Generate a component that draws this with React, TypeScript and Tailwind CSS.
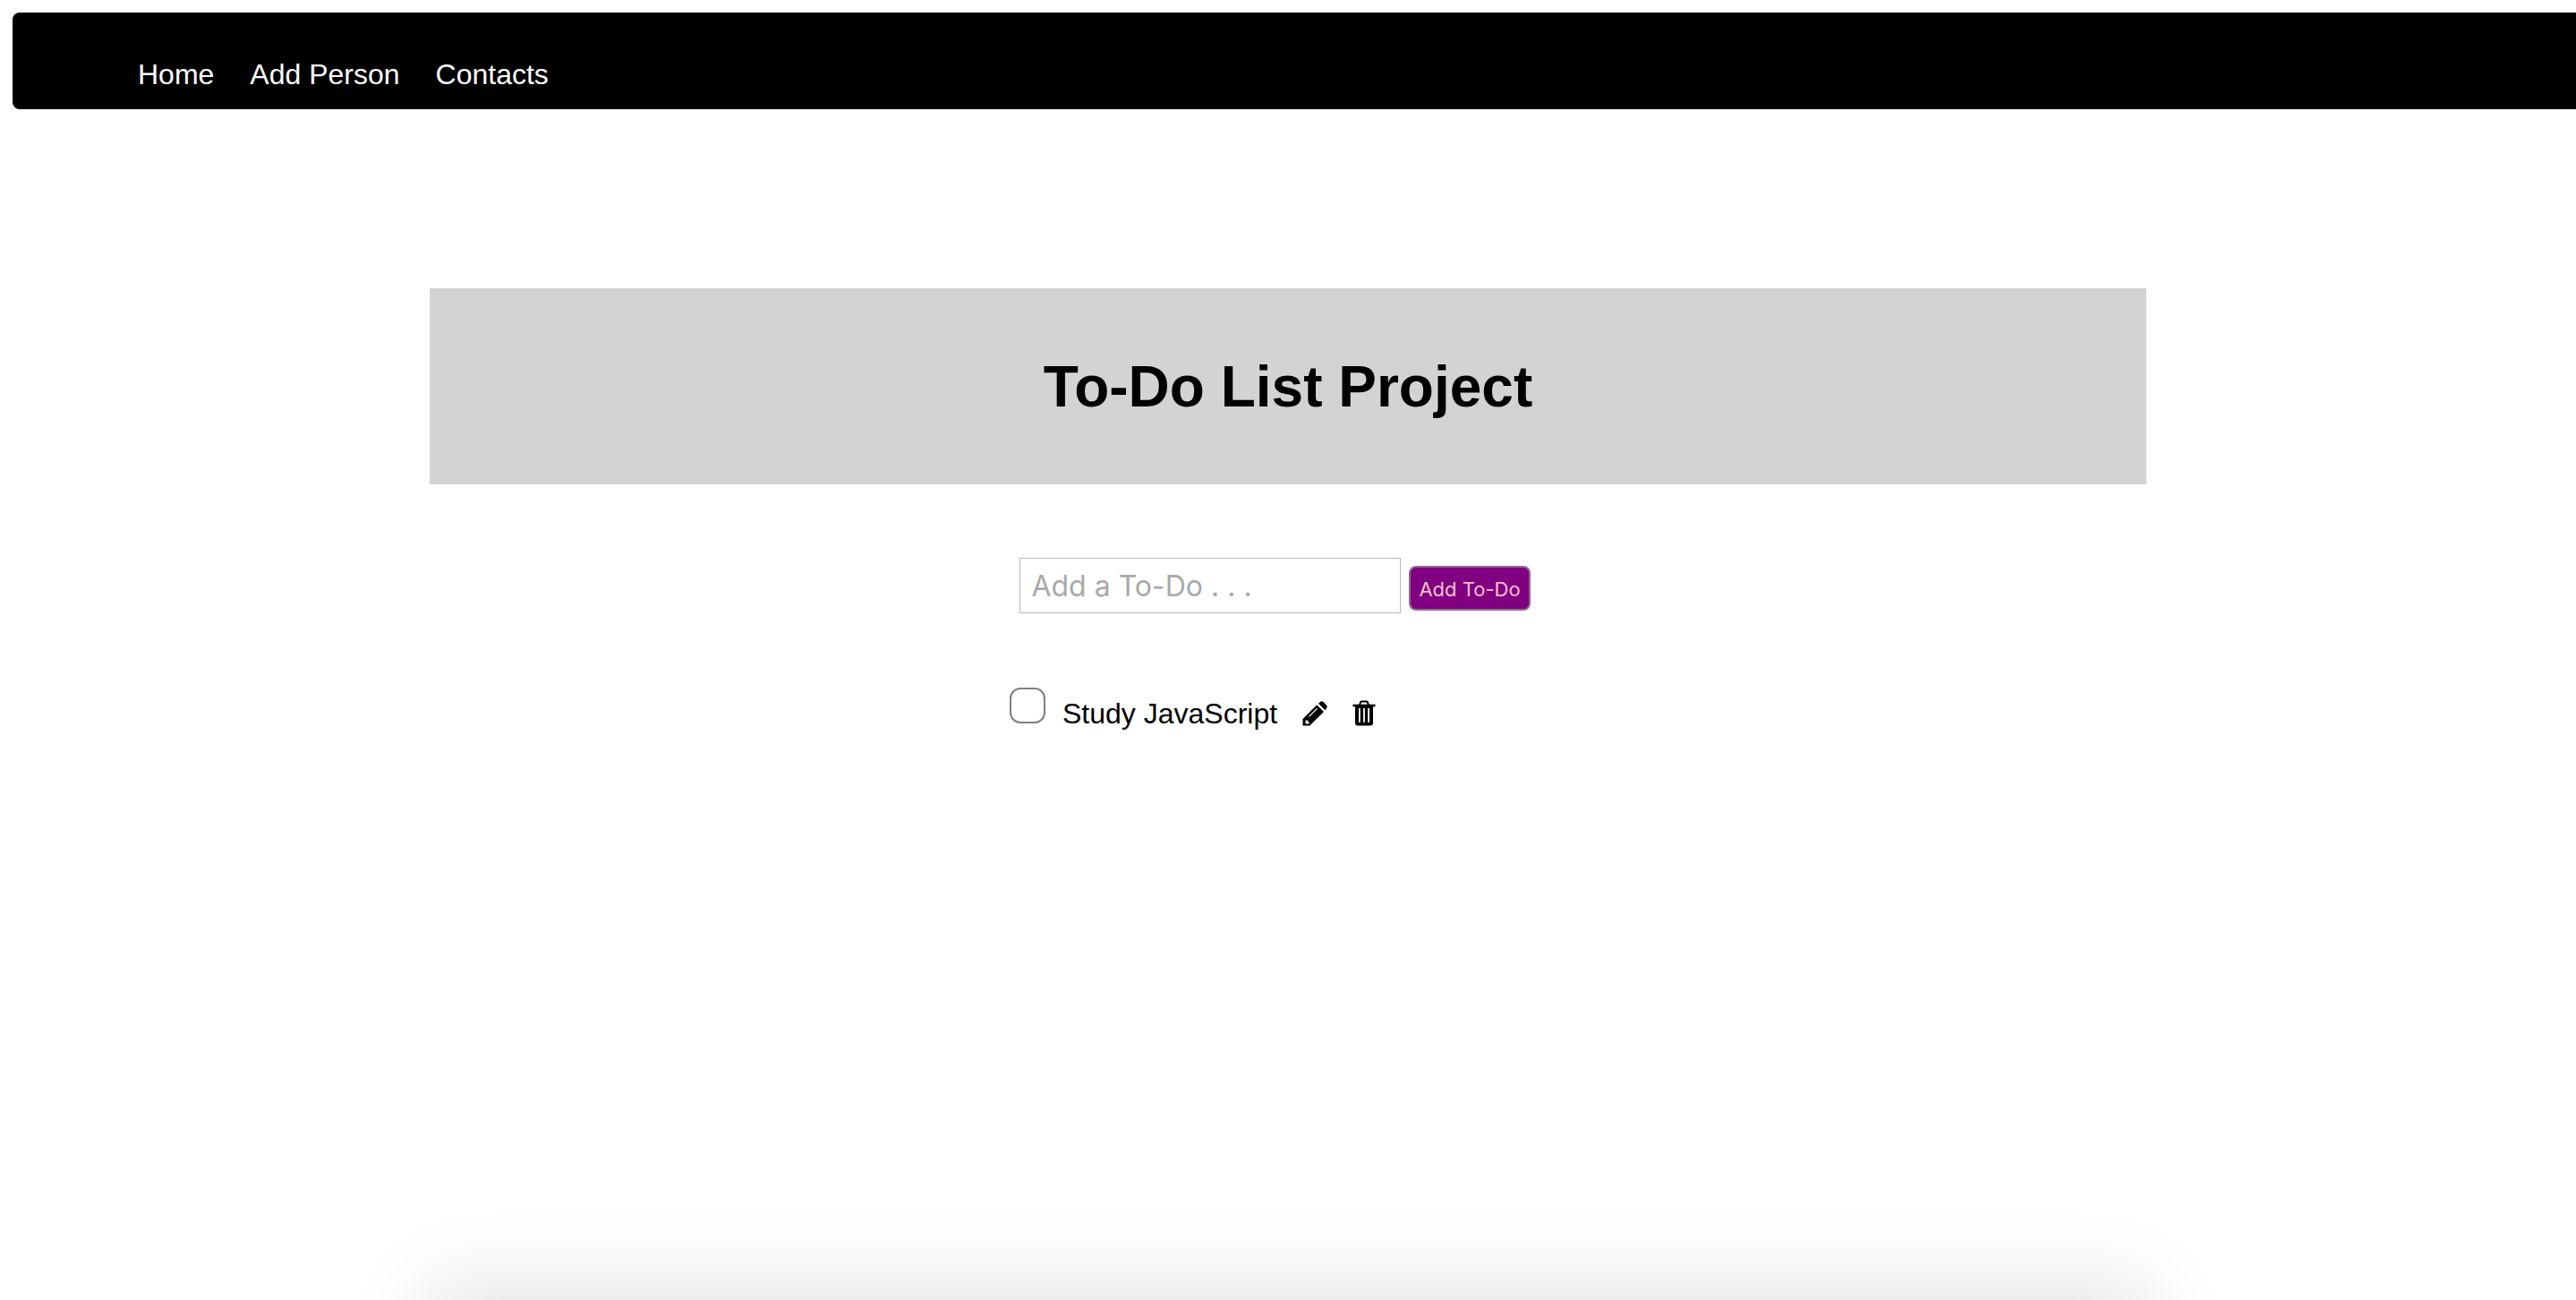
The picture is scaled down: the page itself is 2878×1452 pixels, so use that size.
import { useState } from "react";

const links = ["Home", "Add Person", "Contacts"];

function PencilIcon() {
  return (
    <svg viewBox="0 0 28 28" className="size-7" aria-hidden="true">
      <path d="M0.5 27.5V20L16.2 4.3L24 12L8.3 27.5Z" fill="currentColor" />
      <path d="M18 2.7L20 0.9Q21.8-0.5 23.5 1L27 4.7Q28.4 6.4 27 8.1L25.4 10.2Z" fill="currentColor" />
      <path d="M7.5 17.3L16.5 8.3" stroke="white" strokeWidth="1.2" />
      <path d="M4 21.5H6.3V23.7H8V25L4.8 25.8L3.2 24Z" fill="white" />
    </svg>
  );
}

function TrashIcon() {
  return (
    <svg viewBox="0 0 26 29" className="h-[29px] w-[26px]" fill="none" stroke="currentColor" aria-hidden="true">
      <path d="M8 5.5 9.2 2.2Q9.5 1.5 10.3 1.5H15.7Q16.5 1.5 16.8 2.2L18 5.5" strokeWidth="2" />
      <path d="M0.5 6H25.5" strokeWidth="2.6" />
      <path
        d="M3 6H23V25.5Q23 28.5 20 28.5H6Q3 28.5 3 25.5ZM7 9V24.8H8.8V9ZM12.1 9V24.8H13.9V9ZM17.2 9V24.8H19V9Z"
        fill="currentColor"
        fillRule="evenodd"
        stroke="none"
      />
    </svg>
  );
}

export default function App() {
  const [done, setDone] = useState(false);
  const [text, setText] = useState("");
  return (
    <div className="flex h-screen flex-col overflow-hidden bg-white pt-[14px] font-['Liberation_Sans',Arial,sans-serif] text-[32px] leading-[36px] text-black">
      <nav className="ml-[14px] flex gap-10 rounded-l-lg bg-black pt-[51px] pb-[21px] pl-[140px] text-white">
        {links.map((link) => (
          <a key={link} href="#">
            {link}
          </a>
        ))}
      </nav>
      <main className="mx-auto mt-[200px] flex w-2/3 flex-col">
        <header className="bg-[#d3d3d3] pt-[74px] pb-[73px] text-center">
          <h1 className="text-[64px] leading-[72px] font-bold">To-Do List Project</h1>
        </header>
        <form
          className="mt-[82px] flex items-end justify-center gap-[9px] pr-[29px] font-[Inter,sans-serif]"
          onSubmit={(e) => e.preventDefault()}
        >
          <input
            aria-label="Add a To-Do"
            placeholder="Add a To-Do . . ."
            value={text}
            onChange={(e) => setText(e.target.value)}
            className="h-[62px] w-[426px] border border-[#b8b8b8] px-3 placeholder:text-[#a9a9a9]"
          />
          <button className="mb-[3px] h-[50px] rounded-lg border-2 border-[#8a6a8c] bg-[#800080] px-[9px] pt-px text-[22px] leading-[28px] text-[#ffc0cb]">
            Add To-Do
          </button>
        </form>
        <ul className="mt-[83px] flex flex-col">
          <li className="mx-auto flex w-[622px] items-start">
            <input
              id="todo"
              type="checkbox"
              checked={done}
              onChange={() => setDone(!done)}
              className="size-10 appearance-none rounded-xl border-2 border-[#808080] checked:bg-blue-500"
            />
            <label htmlFor="todo" className="mt-[11px] ml-[19px]">
              Study JavaScript
            </label>
            <button aria-label="Edit" className="mt-[15px] ml-7">
              <PencilIcon />
            </button>
            <button aria-label="Delete" className="mt-[14px] ml-7">
              <TrashIcon />
            </button>
          </li>
        </ul>
      </main>
      <div className="mx-auto mt-auto -mb-[300px] h-[300px] w-2/3 shrink-0 shadow-[0_-12px_88px_0_rgba(0,0,0,0.12)]" />
    </div>
  );
}
